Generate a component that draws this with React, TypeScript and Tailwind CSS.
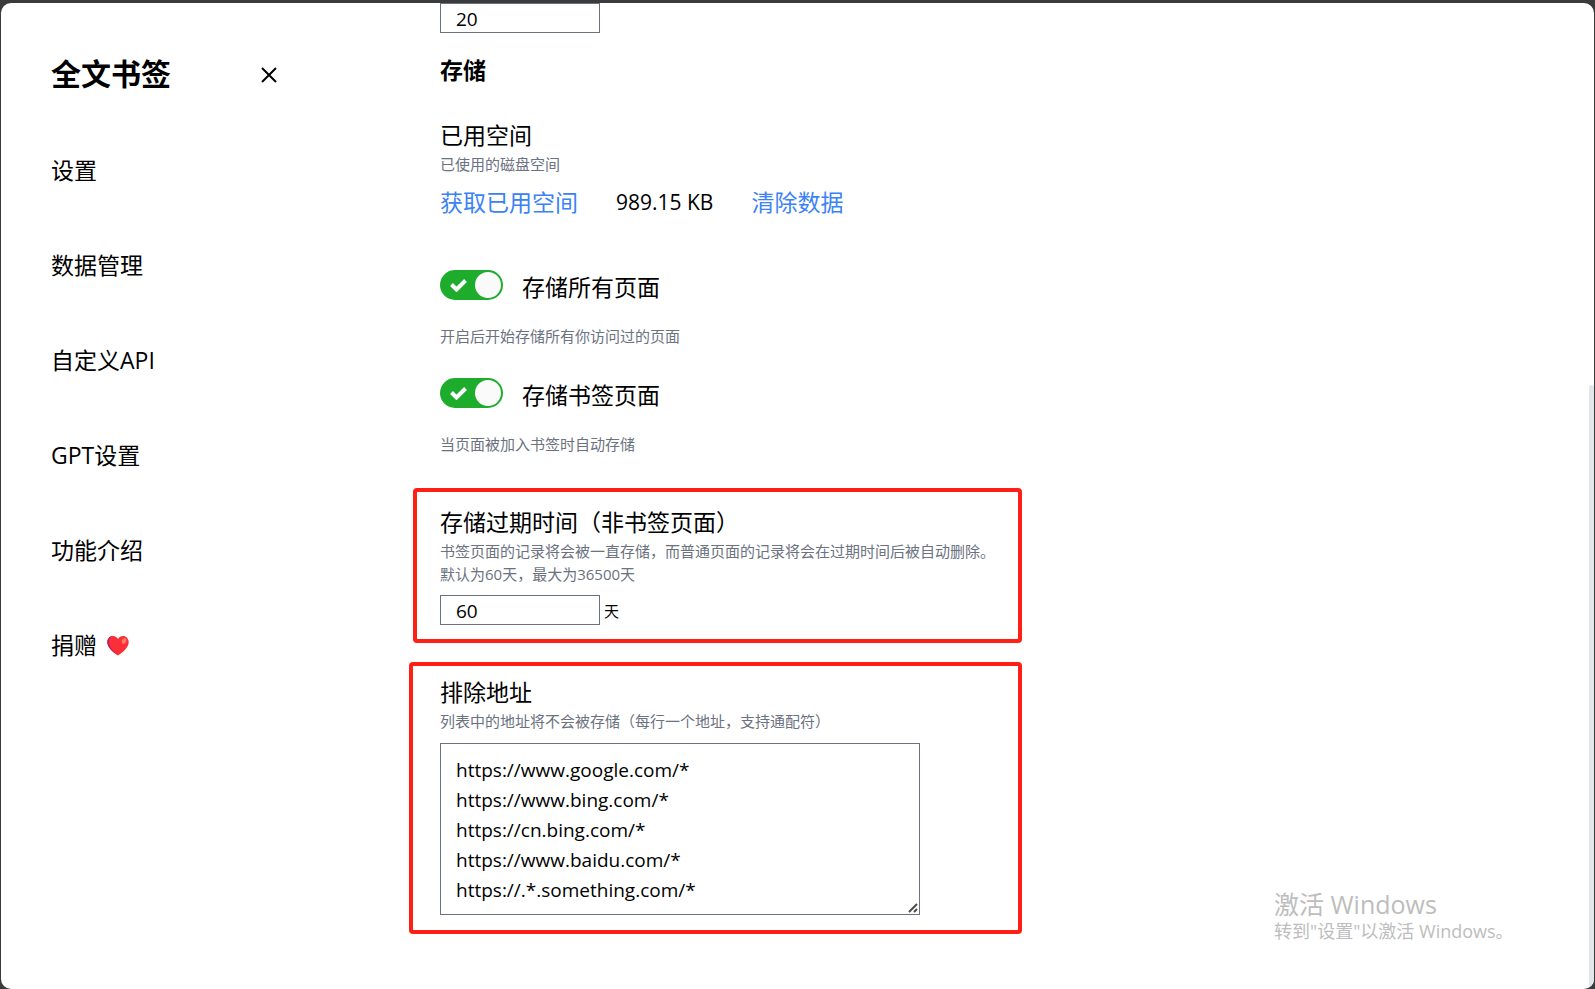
import { useId, useState } from 'react';

const navItems = ['设置', '数据管理', '自定义API', 'GPT设置', '功能介绍'];

const defaultExcluded = [
  'https://www.google.com/*',
  'https://www.bing.com/*',
  'https://cn.bing.com/*',
  'https://www.baidu.com/*',
  'https://.*.something.com/*',
].join('\n');

function HeartIcon() {
  return (
    <svg viewBox="0 0 24 22" className="h-[21px] w-6" aria-hidden="true">
      <path
        d="M12 21.5C6 17.5.8 13 .8 7.4.8 3.8 3.4 1 6.7 1c2.2 0 4.2 1.2 5.3 3.2C13.1 2.2 15.1 1 17.3 1c3.3 0 5.9 2.8 5.9 6.4 0 5.6-5.2 10.1-11.2 14.1z"
        fill="#fa2f38"
      />
      <path
        d="M12 21.5C6 17.5.8 13 .8 7.4.8 3.8 3.4 1 6.700 1 3.700 2.300 2.500 4.700 2.700 7.700 3 13 7.500 17.500 12 21.500z"
        fill="#c51a5e"
      />
      <ellipse cx="18.400" cy="6.200" rx="2.200" ry="3.200" transform="rotate(25 18.4 6.2)" fill="#ff7a6b" />
    </svg>
  );
}

function Sidebar() {
  return (
    <aside className="w-[389px] shrink-0 pt-[46px] pl-[50px]">
      <div className="flex w-[230px] items-center justify-between">
        <h1 className="text-[30px] leading-[50px] font-bold">全文书签</h1>
        <button type="button" aria-label="关闭" className="flex size-6 items-end justify-center">
          <svg viewBox="0 0 16 16" className="mb-[3px] size-4" fill="none" stroke="#000" strokeWidth="2">
            <path d="M1 1l14 14M15 1L1 15" />
          </svg>
        </button>
      </div>
      <nav className="mt-[55px] flex flex-col items-start gap-[63px] text-[23px] leading-8">
        {navItems.map((item) => (
          <a key={item} href="#">
            {item}
          </a>
        ))}
        <a href="#" className="flex items-center gap-[9px]">
          捐赠
          <HeartIcon />
        </a>
      </nav>
    </aside>
  );
}

function Toggle({ label, hint, className }: { label: string; hint: string; className: string }) {
  const [on, setOn] = useState(true);
  return (
    <div className={className}>
      <label className="flex h-[35px] cursor-pointer items-start gap-[19px]">
        <input
          type="checkbox"
          className="peer sr-only"
          checked={on}
          onChange={(e) => setOn(e.target.checked)}
        />
        <span className="flex h-[30px] w-[63px] items-center justify-end gap-2 rounded-full bg-gray-300 px-[2px] peer-checked:bg-[#1eac2c] peer-[:not(:checked)]:flex-row-reverse">
          <svg viewBox="0 0 17 13" className="h-[13px] w-[17px]" fill="none" stroke="#fff" strokeWidth="4">
            <path d="M1.500 5.500l5 5L15.500 1.500" />
          </svg>
          <span className="size-[26px] rounded-full bg-[#fafafa]" />
        </span>
        <span className="text-[23px] leading-[34px]">{label}</span>
      </label>
      <p className="mt-5 text-[15px] leading-[23px] text-[#6b7280]">{hint}</p>
    </div>
  );
}

function Storage() {
  const daysId = useId();
  const excludeId = useId();
  return (
    <main className="min-w-0 grow pl-[50px]">
      <input
        type="text"
        aria-label="数量"
        defaultValue="20"
        className="block h-[30px] w-40 border border-[#6b7280] px-[15px] pt-[2px] text-[19px]"
      />
      <h2 className="mt-[21px] text-[23px] leading-8 font-bold">存储</h2>

      <h3 className="mt-[33px] mb-[2px] text-[23px] leading-8">已用空间</h3>
      <p className="text-[15px] leading-[23px] text-[#6b7280]">已使用的磁盘空间</p>
      <div className="mt-[10px] flex gap-[38px] text-[23px] leading-8">
        <button type="button" className="text-[#3b82f6]">获取已用空间</button>
        <span className="text-[21px]">989.15 KB</span>
        <button type="button" className="text-[#3b82f6]">清除数据</button>
      </div>

      <Toggle className="mt-[52px]" label="存储所有页面" hint="开启后开始存储所有你访问过的页面" />
      <Toggle className="mt-[30px]" label="存储书签页面" hint="当页面被加入书签时自动存储" />

      <section className="mt-8 -ml-[27px] max-w-[609px] rounded-[4px] border-4 border-[#ff1f14] py-[14px] pl-[23px]">
        <label htmlFor={daysId} className="mb-[2px] block text-[23px] leading-8">
          存储过期时间（非书签页面）
        </label>
        <p className="text-[15px] leading-[23px] text-[#6b7280]">
          书签页面的记录将会被一直存储，而普通页面的记录将会在过期时间后被自动删除。
          <br />
          默认为60天，最大为36500天
        </p>
        <div className="mt-[9px] flex items-center gap-1">
          <input
            id={daysId}
            type="text"
            defaultValue="60"
            className="h-[30px] w-40 border border-[#6b7280] px-[15px] pt-[2px] text-[19px]"
          />
          <span className="pt-[2px] text-[15px]">天</span>
        </div>
      </section>

      <section className="mt-[19px] -ml-[31px] max-w-[613px] rounded-[4px] border-4 border-[#ff1f14] pt-[10px] pb-[15px] pl-[27px]">
        <label htmlFor={excludeId} className="mb-[2px] block text-[23px] leading-8">
          排除地址
        </label>
        <p className="text-[15px] leading-[23px] text-[#6b7280]">
          列表中的地址将不会被存储（每行一个地址，支持通配符）
        </p>
        <div className="relative mt-[10px] w-fit">
          <textarea
            id={excludeId}
            rows={5}
            defaultValue={defaultExcluded}
            className="block w-[480px] border border-[#6b7280] px-[15px] pt-[11px] pb-[9px] text-[19px] leading-[30px]"
          />
          <svg
            viewBox="0 0 14 14"
            className="pointer-events-none absolute right-px bottom-px size-[14px] bg-white"
            fill="none"
            stroke="#4b4b4b"
            strokeWidth="2"
            aria-hidden="true"
          >
            <path d="M4 12l8-8M9 12l3-3" />
          </svg>
        </div>
      </section>
    </main>
  );
}

export default function App() {
  return (
    <div className="flex h-screen flex-col bg-[#3b3b3b] pt-[3px] pr-px pl-px font-['Open_Sans','Noto_Sans_CJK_SC',sans-serif] text-black">
      <div className="relative flex min-h-0 grow overflow-hidden rounded-[10px] bg-white">
        <Sidebar />
        <Storage />
        <div className="absolute top-[382px] right-0 bottom-0 w-[5px] rounded-t-sm bg-[#e2e7eb]" />
        <div className="absolute right-[80px] bottom-[46px] w-[240px] whitespace-nowrap text-[#bdbdbd]">
          <p className="text-[25px] leading-[30px]">激活 Windows</p>
          <p className="text-[18px] leading-[24px]">转到"设置"以激活 Windows。</p>
        </div>
      </div>
    </div>
  );
}
